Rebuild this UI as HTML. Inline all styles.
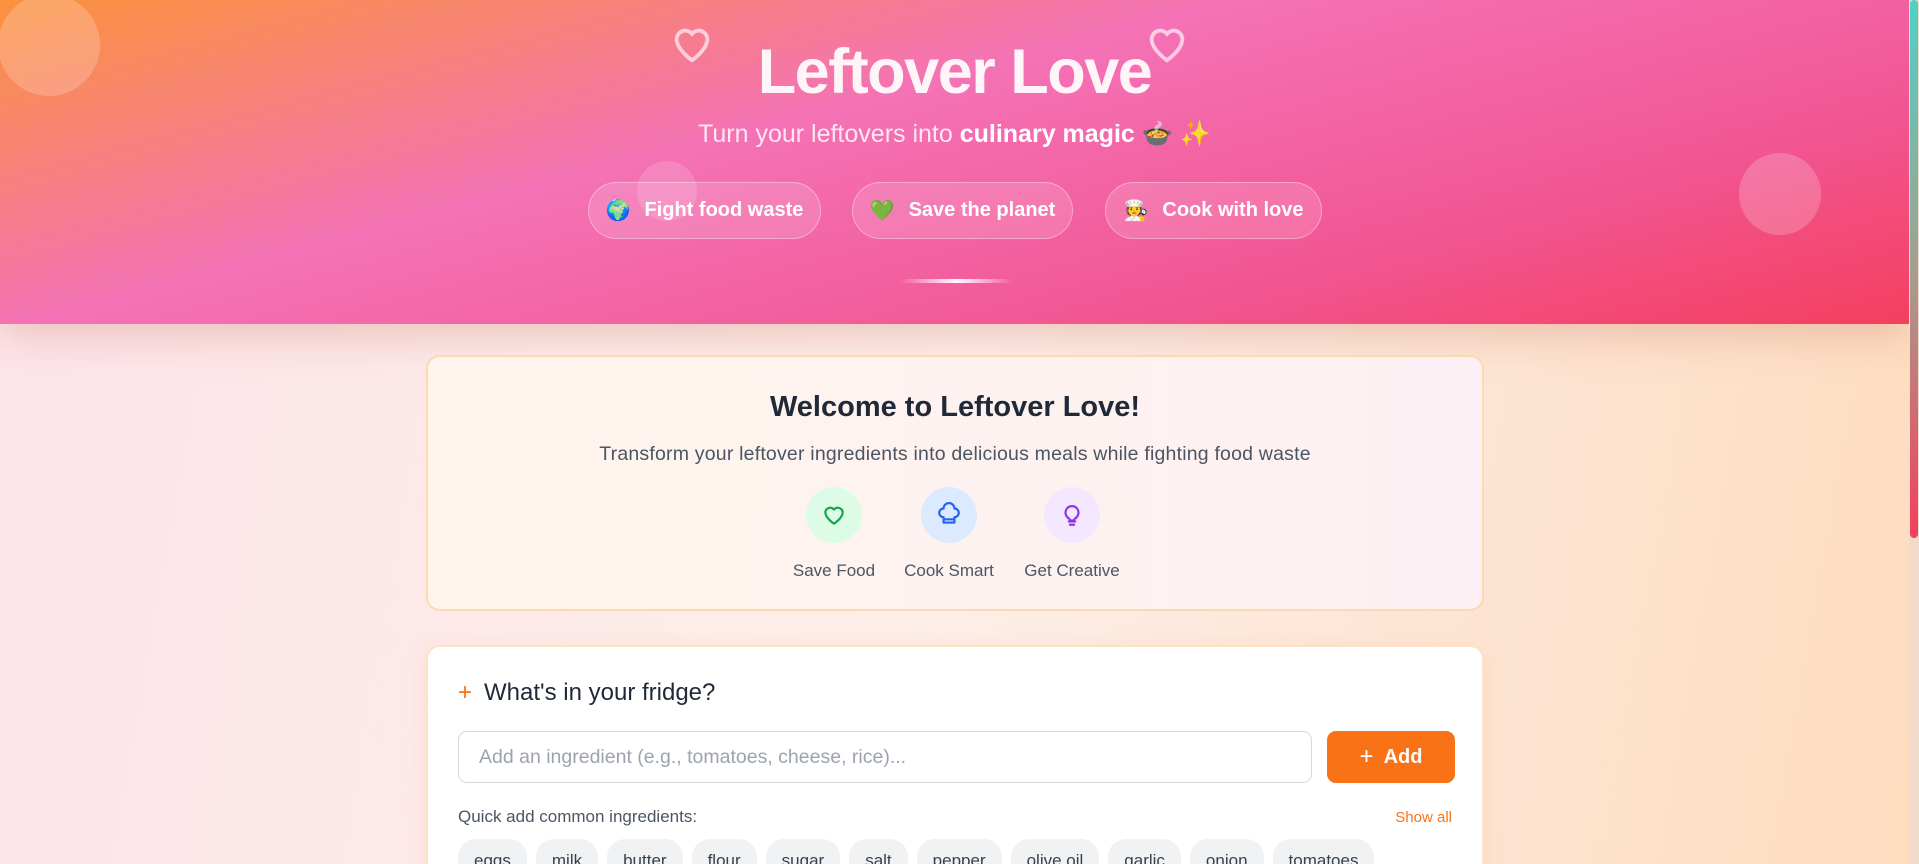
<!DOCTYPE html>
<html style="width:1919px;height:864px;overflow:hidden"><head><meta charset="utf-8"><style>
*{box-sizing:border-box;margin:0;padding:0}
body{width:1919px;height:864px;overflow:hidden;font-family:"Liberation Sans","DejaVu Sans",sans-serif;background:linear-gradient(100deg,#fde4ea 0%,#fdeee8 50%,#fddcbf 100%);position:relative}
.hdr{position:absolute;left:0;top:0;width:1909px;height:324px;background:linear-gradient(165deg,#fb923c 0%,#f472b6 40%,#f25591 75%,#f43f5e 100%);overflow:hidden;box-shadow:0 10px 40px rgba(200,120,100,.35)}
.circ{position:absolute;border-radius:50%;background:rgba(255,255,255,.2)}
.title{position:absolute;left:0;width:1909px;top:36px;text-align:center;font-size:63px;font-weight:bold;color:#fff5f8;letter-spacing:-1.5px}
.sub{position:absolute;left:0;width:1909px;top:120px;text-align:center;font-size:25px;color:#fde8f0}
.sub b{color:#fff}
.pill{position:absolute;top:182px;height:57px;border-radius:29px;border:1px solid rgba(255,255,255,.35);background:rgba(255,255,255,.15);color:#fff;font-size:20px;font-weight:bold;display:flex;align-items:center;justify-content:center;gap:14px}
.bar{position:absolute;left:900px;top:279px;width:113px;height:4px;border-radius:2px;background:linear-gradient(90deg,rgba(255,255,255,0),#fff,rgba(255,255,255,0))}
.scroll{position:absolute;right:0;top:0;width:10px;height:864px;background:#f1dccb}
.thumb{position:absolute;right:1px;top:0;width:8px;height:538px;border-radius:4px;background:linear-gradient(#4fd1c5,#a3a08f,#f43f5e)}
.card{position:absolute;left:426px;width:1058px;border-radius:14px}
.wel{top:355px;height:256px;background:linear-gradient(90deg,#fff5ec,#fdf0f4);border:2px solid #fcd9b0}
.wel h2{position:absolute;top:34px;width:100%;text-align:center;font-size:29px;color:#1f2937}
.wel p{position:absolute;top:86px;width:100%;text-align:center;font-size:19.5px;color:#4b5563;letter-spacing:.2px}
.ic{position:absolute;top:130px;width:56px;height:56px;border-radius:50%;display:flex;align-items:center;justify-content:center}
.lb{position:absolute;top:204px;font-size:17px;color:#4b5563;width:160px;text-align:center}
.fr{top:645px;height:260px;background:#fff;border:2px solid #fde2c4;box-shadow:0 4px 20px rgba(250,170,120,.2)}
.fr h3{position:absolute;left:30px;top:32px;font-size:24px;color:#1f2937;font-weight:normal}
.fr h3 span{color:#f97316;margin-right:12px}
.inp{position:absolute;left:30px;top:84px;width:854px;height:52px;border:1.5px solid #d6d8de;border-radius:9px;font-size:19.5px;color:#9ca3af;padding:14px 20px}
.add{position:absolute;left:899px;top:84px;width:128px;height:52px;border-radius:9px;background:#f97316;color:#fff;font-size:20px;font-weight:bold;display:flex;align-items:center;justify-content:center;gap:10px}
.qa{position:absolute;left:30px;top:160px;font-size:17px;color:#4b5563}
.sa{position:absolute;right:30px;top:162px;font-size:15px;color:#f97316}
.chips{position:absolute;left:30px;top:192px;display:flex;gap:9px}
.chip{background:#f1f2f4;border-radius:18px;height:40px;padding:12px 16px;font-size:17px;color:#374151}
</style></head><body>
<div class="hdr">
<div class="circ" style="left:-2px;top:-6px;width:102px;height:102px"></div>
<div class="circ" style="left:637px;top:161px;width:60px;height:60px;background:rgba(255,255,255,.15)"></div>
<div class="circ" style="left:1739px;top:153px;width:82px;height:82px"></div>
<svg style="position:absolute;left:668px;top:20px" width="48" height="46" viewBox="0 0 24 24" fill="none" stroke="rgba(255,220,235,.85)" stroke-width="2"><path d="M12 21s-8-5.5-8-11a4.5 4.5 0 0 1 8-2.8A4.5 4.5 0 0 1 20 10c0 5.5-8 11-8 11z"/></svg>
<svg style="position:absolute;left:1143px;top:20px" width="48" height="46" viewBox="0 0 24 24" fill="none" stroke="rgba(255,220,235,.85)" stroke-width="2"><path d="M12 21s-8-5.5-8-11a4.5 4.5 0 0 1 8-2.8A4.5 4.5 0 0 1 20 10c0 5.5-8 11-8 11z"/></svg>
<div class="title">Leftover Love</div>
<div class="sub">Turn your leftovers into <b>culinary magic</b> 🍲 ✨</div>
<div class="pill" style="left:588px;width:233px">🌍 <span>Fight food waste</span></div>
<div class="pill" style="left:852px;width:221px">💚 <span>Save the planet</span></div>
<div class="pill" style="left:1105px;width:217px">🧑‍🍳 <span>Cook with love</span></div>
<div class="bar"></div>
</div>
<div class="scroll"><div class="thumb"></div></div>

<div class="card wel">
<h2>Welcome to Leftover Love!</h2>
<p>Transform your leftover ingredients into delicious meals while fighting food waste</p>
<div class="ic" style="left:378px;background:#dcfce7"><svg width="26" height="26" viewBox="0 0 24 24" fill="none" stroke="#16a34a" stroke-width="2" stroke-linejoin="round"><path d="M12 20s-8-5-8-10.5A4.5 4.5 0 0 1 12 7a4.5 4.5 0 0 1 8 2.5C20 15 12 20 12 20z"/></svg></div>
<div class="ic" style="left:493px;background:#dbeafe"><svg width="26" height="26" viewBox="0 0 24 24" fill="none" stroke="#2563eb" stroke-width="2" stroke-linejoin="round"><path d="M7 14v5h10v-5a4 4 0 0 0 0-8 5 5 0 0 0-10 0 4 4 0 0 0 0 8zM7 16h10"/></svg></div>
<div class="ic" style="left:616px;background:#f3e8ff"><svg width="26" height="26" viewBox="0 0 24 24" fill="none" stroke="#9333ea" stroke-width="2" stroke-linecap="round"><path d="M9 18h6M10 21h4M9 15a6 6 0 1 1 6 0c-.6.5-1 1-1 2h-4c0-1-.4-1.5-1-2z"/></svg></div>
<div class="lb" style="left:326px">Save Food</div>
<div class="lb" style="left:441px">Cook Smart</div>
<div class="lb" style="left:564px">Get Creative</div>
</div>

<div class="card fr">
<h3><span>+</span>What's in your fridge?</h3>
<div class="inp">Add an ingredient (e.g., tomatoes, cheese, rice)...</div>
<div class="add"><span style="font-weight:normal;font-size:24px">+</span> Add</div>
<div class="qa">Quick add common ingredients:</div>
<div class="sa">Show all</div>
<div class="chips"><div class="chip">eggs</div><div class="chip">milk</div><div class="chip">butter</div><div class="chip">flour</div><div class="chip">sugar</div><div class="chip">salt</div><div class="chip">pepper</div><div class="chip">olive oil</div><div class="chip">garlic</div><div class="chip">onion</div><div class="chip">tomatoes</div></div>
</div>
</body></html>
